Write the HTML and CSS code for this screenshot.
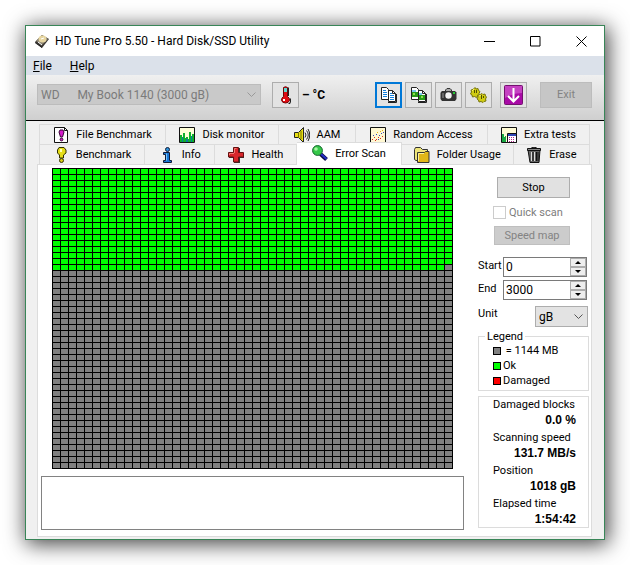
FILE: index.html
```html
<!DOCTYPE html>
<html lang="en">

<head>
    <meta charset="UTF-8">
    <meta name="viewport" content="width=device-width, initial-scale=1.0">
    <title>HD Tune Pro 5.50 - Hard Disk/SSD Utility</title>
    <link rel="stylesheet" href="styles.css">
</head>

<body>
    <div class="window">
        <header class="title-bar">
            <svg class="app-icon" viewBox="0 0 16 16">
                <path d="M1 9L8 2l7 4-7 9z" fill="#3a3632"/>
                <path d="M2 8l6-6 6 4-6 6z" fill="#8d8573"/>
                <ellipse cx="8.500" cy="6" rx="4" ry="3.500" fill="#e6d5a0"/>
                <path d="M7 6l3-1M4 9l4 3" stroke="#fff" fill="none"/>
                <path d="M1 9l7 5v1l-7-5z" fill="#111"/>
            </svg>
            <h1>HD Tune Pro 5.50 - Hard Disk/SSD Utility</h1>
            <div class="window-buttons">
                <button aria-label="Minimize"><svg viewBox="0 0 11 11"><path d="M0 5.500h11"/></svg></button>
                <button aria-label="Maximize"><svg viewBox="0 0 11 11"><path d="M.5.5h9.500v9.500H.5z"/></svg></button>
                <button aria-label="Close"><svg viewBox="0 0 11 11"><path d="M.5.500l10 10M10.500.5l-10 10"/></svg></button>
            </div>
        </header>

        <nav class="menu-bar">
            <a href="#file"><u>F</u>ile</a>
            <a href="#help"><u>H</u>elp</a>
        </nav>

        <div class="toolbar">
            <select class="drive-select" aria-label="Drive" disabled>
                <option>WD &nbsp; &nbsp; &nbsp;My Book 1140 (3000 gB)</option>
            </select>
            <button class="tool" aria-label="Temperature">
                <svg class="thermometer" viewBox="0 0 17 18">
                    <path d="M6.500 1.500Q8.500 0 10.500 1.500V10.500Q13 12 12.500 14.500 11.500 17 8.500 17 5 17 4.500 14 4.500 12 6.500 10.500z" fill="#e00b12" stroke="#6d0508"/>
                    <path d="M7 2h3v4H7z" fill="#5fd9d2"/>
                    <path d="M11 1v9h1V2zM13 12v4l-2 2h2l1-2v-3z" fill="#222"/>
                    <path d="M6 13h2v2H6z" fill="#fff"/>
                </svg>
            </button>
            <span class="temperature">– °C</span>
            <div class="tool-group">
                <button class="tool focused" aria-label="Copy text">
                    <svg viewBox="0 0 17 16">
                        <path d="M1.500.5h5l2 2v10h-7z" fill="#fff" stroke="#222"/>
                        <path d="M8.500 3.500h4l3 3v8h-7z" fill="#fff" stroke="#222"/>
                        <path d="M12.500 3.500v3h3M8 15.500h8.500V7" fill="none" stroke="#222"/>
                        <path d="M3 3.500h3M3 5.500h4M3 7.500h4M3 9.500h4M10 6.500h2M10 8.500h4M10 10.500h4M10 12.500h4" stroke="#1480dc"/>
                    </svg>
                </button>
                <button class="tool" aria-label="Copy picture">
                    <svg viewBox="0 0 17 16">
                        <path d="M1.500.5h5l2 2v10h-7z" fill="#fff" stroke="#222"/>
                        <path d="M8.500 3.500h4l3 3v8h-7z" fill="#fff" stroke="#222"/>
                        <path d="M12.500 3.500v3h3M8 15.500h8.500V7" fill="none" stroke="#222"/>
                        <path d="M2 5h6v5H2zM9 8h6v5H9z" fill="#279b18"/>
                        <path d="M3 6h2v2H3zM11 9h2v2h-2z" fill="#8de04a"/>
                        <path d="M2 3h4v2H2zM9 6h3v2H9z" fill="#77c7ef"/>
                    </svg>
                </button>
                <button class="tool" aria-label="Save screenshot">
                    <svg viewBox="0 0 17 16">
                        <path d="M5.500 5V3L7 1.500h3L11.500 3v2" fill="#aaa" stroke="#333"/>
                        <path d="M1 5l1-1h13l1.500 1.500V12L15 14H2L.5 12V6z" fill="#333"/>
                        <circle cx="8.500" cy="8.500" r="3.200" fill="#f4f4f4"/>
                        <path d="M2 6h2v5H2z" fill="#666"/>
                        <path d="M13 5h2v2h-2z" fill="#25ce35"/>
                    </svg>
                </button>
                <button class="tool" aria-label="Options">
                    <svg viewBox="0 0 17 16">
                        <g fill="#d0cc12" stroke="#77740a">
                            <path d="M5 .5l1 1.500 2-.5.5 2 1.500 1-1 2 .5 2-2 .5-1 1.500-2-1-2 .5-.5-2-1.500-1 1-2-.5-2 2-.5z"/>
                            <path d="M12 6.500l1 1 2-.5.5 2 1 1-1 2 .5 2-2 .5-1 1-2-1-2 .5-.5-2-1.500-1 1-2-.5-2 2 0z"/>
                        </g>
                        <path d="M4.500 3v3M6.500 3v3M11.500 8v4M13.500 9v2" stroke="#504f00"/>
                        <path d="M2 4l2-2M9 9l2-1" stroke="#f6f36c"/>
                    </svg>
                </button>
            </div>
            <button class="tool update" aria-label="Check for updates">
                <svg viewBox="0 0 19 20">
                    <rect x=".5" y=".5" width="18" height="19" rx="1" fill="#a80aa6" stroke="#74106f"/>
                    <path d="M1 1h17v7Q9 8 1 13z" fill="#c541c2"/>
                    <path d="M9.500 3v13M4 11l5.500 5.500L15 11" fill="none" stroke="#fff" stroke-width="2"/>
                </svg>
            </button>
            <button class="exit" disabled>Exit</button>
        </div>

        <main>
            <div class="tabs" role="tablist">
                <div class="tab-row back-row">
                    <button role="tab">
                        <svg viewBox="0 0 16 16">
                            <path d="M1.500.5h10l3 3v12h-13z" fill="#fff" stroke="#111"/>
                            <path d="M11.500.5v3h3" fill="none" stroke="#111"/>
                            <path d="M7 3h3l1 2-1.500 5h-2L6 5z" fill="#d51bcb" stroke="#3a0738"/>
                            <circle cx="8.500" cy="12.500" r="1.400" fill="#d51bcb" stroke="#3a0738"/>
                        </svg>
                        File Benchmark
                    </button>
                    <button role="tab">
                        <svg viewBox="0 0 16 16">
                            <path d="M.5.5h15v15H.5z" fill="#ffffd8" stroke="#111"/>
                            <path d="M1 15V8h2v2h1V6h2v5h1v-1h2v2h1V5h2v4h1V7h2v8z" fill="#0fb02d"/>
                            <path d="M3 15v-5h1v5zM7 15v-3h2v3zM12 15V9h1v6z" fill="#087ca0"/>
                        </svg>
                        Disk monitor
                    </button>
                    <button role="tab">
                        <svg viewBox="0 0 16 16">
                            <path d="M.5 5.500h4l5-5v15l-5-5h-4z" fill="#e8df15" stroke="#222"/>
                            <path d="M4.500 5v6M7 4v8" stroke="#777200"/>
                            <path d="M11 5.500q2 2.500 0 5M12.500 3.500q3.500 4.500 0 9M14 2q3.500 6 0 12" fill="none" stroke="#222"/>
                        </svg>
                        AAM
                    </button>
                    <button role="tab">
                        <svg viewBox="0 0 16 16">
                            <path d="M.5.5h15v15H.5z" fill="#fff8d2" stroke="#111"/>
                            <path d="M2 12h1v1H2zM4 10h1v1H4zM6 12h1v1H6zM8 10h1v1H8zM10 11h1v1h-1zM12 9h1v1h-1zM5 13h1v1H5z" fill="#d83124"/>
                            <path d="M3 8h1v1H3zM6 7h1v1H6zM9 8h1v1H9zM11 6h1v1h-1zM13 5h1v1h-1zM8 12h1v1H8z" fill="#3b46bf"/>
                            <path d="M7 5h1v1H7zM10 4h1v1h-1zM12 3h1v1h-1z" fill="#e7b21b"/>
                        </svg>
                        Random Access
                    </button>
                    <button role="tab">
                        <svg viewBox="0 0 16 16">
                            <path d="M.5.500h15v15H.5z" fill="#fffbd4" stroke="#111"/>
                            <path d="M1 15V7h2v3h1V9h1v6z" fill="#19a843"/>
                            <path d="M6.500 6.500h9v9h-9z" fill="#fff" stroke="#111"/>
                            <path d="M7 7h8v2H7z" fill="#3046b5"/>
                            <path d="M8 10h1v1H8zM10 10h1v1h-1zM12 10h1v1h-1zM8 12h1v1H8zM10 12h1v1h-1zM12 12h1v1h-1zM8 14h1v1H8zM10 14h1v1h-1zM12 14h1v1h-1z" fill="#b0258c"/>
                        </svg>
                        Extra tests
                    </button>
                </div>
                <div class="tab-row front-row">
                    <button role="tab">
                        <svg viewBox="0 0 16 16">
                            <path d="M6 .5h5L13 3v3l-2.500 2v3h-4V8L4.500 6V3z" fill="#e5dd18" stroke="#333100"/>
                            <path d="M7 2h2v3H7z" fill="#ffffb4"/>
                            <circle cx="8.500" cy="13.500" r="2" fill="#d6ce15" stroke="#333100"/>
                        </svg>
                        Benchmark
                    </button>
                    <button role="tab">
                        <svg viewBox="0 0 16 16">
                            <circle cx="8.500" cy="2.500" r="2" fill="#2d91d8" stroke="#101b37"/>
                            <path d="M4.500 5.500h6v8h2v2h-8v-2h2v-6h-2z" fill="#1674d5" stroke="#101b37"/>
                            <path d="M7.500 6.500v7" stroke="#75c5ff"/>
                        </svg>
                        Info
                    </button>
                    <button role="tab">
                        <svg viewBox="0 0 16 16">
                            <path d="M6 1h6v5h4v5h-4v5H6v-5H1V6h5z" fill="#333"/>
                            <path d="M5.500.5h5v5h5v4.500h-5v5h-5v-5h-5V5.500h5z" fill="#d8262b" stroke="#64100f"/>
                            <path d="M6.500 6V1.500h2M1.500 8V6.500H6" fill="none" stroke="#f47873"/>
                        </svg>
                        Health
                    </button>
                    <button role="tab" class="active" aria-selected="true">
                        <svg viewBox="0 0 16 16">
                            <path d="M8.500 9l6 5.500" stroke="#080840" stroke-width="4"/>
                            <path d="M9 9l5.500 5" stroke="#2430c5" stroke-width="2"/>
                            <circle cx="5.500" cy="5.500" r="4.900" fill="#35c849" stroke="#12632a"/>
                            <circle cx="4" cy="4" r="1.800" fill="#a8f3a3"/>
                        </svg>
                        Error Scan
                    </button>
                    <button role="tab">
                        <svg viewBox="0 0 16 16">
                            <path d="M.5 2.500l1-2h5l2 2h5v11H2l-1.500-1z" fill="#eee57a" stroke="#333"/>
                            <path d="M3.500 5.500h7l1-1h3.500v11H3.500z" fill="#e1b719" stroke="#333"/>
                            <path d="M4.500 14V6.500H10" fill="none" stroke="#fff199"/>
                        </svg>
                        Folder Usage
                    </button>
                    <button role="tab">
                        <svg viewBox="0 0 16 16">
                            <path d="M2 3h12l-1 12.500H4z" fill="#666" stroke="#111"/>
                            <path d="M1.500 1.500h13v2h-13zM6 0h4v1H6z" fill="#888" stroke="#111"/>
                            <path d="M5.500 5v9M8.500 5v9" stroke="#ddd"/>
                            <path d="M7 5v9M10.500 5v9M12 5v9" stroke="#111"/>
                        </svg>
                        Erase
                    </button>
                </div>
            </div>

            <div class="panel">
                <div class="scan-section">
                    <div class="block-map" id="blockMap"></div>
                    <textarea class="log" aria-label="Scan log" readonly></textarea>
                </div>

                <div class="side-section">
                    <div class="actions">
                        <button class="stop">Stop</button>
                        <label class="quick-scan"><input type="checkbox" disabled>Quick scan</label>
                        <button class="speed-map" disabled>Speed map</button>
                    </div>

                    <div class="fields">
                        <label for="start">Start</label>
                        <div class="spinner">
                            <input type="text" id="start" value="0">
                            <div class="arrows">
                                <button aria-label="Increase start" onclick="stepValue('start', 1)"></button>
                                <button aria-label="Decrease start" onclick="stepValue('start', -1)"></button>
                            </div>
                        </div>
                        <label for="end">End</label>
                        <div class="spinner">
                            <input type="text" id="end" value="3000">
                            <div class="arrows">
                                <button aria-label="Increase end" onclick="stepValue('end', 1)"></button>
                                <button aria-label="Decrease end" onclick="stepValue('end', -1)"></button>
                            </div>
                        </div>
                    </div>
                    <div class="unit-row">
                        <label for="unit">Unit</label>
                        <select id="unit" class="unit-select">
                            <option>gB</option>
                        </select>
                    </div>

                    <fieldset class="legend">
                        <legend>Legend</legend>
                        <ul>
                            <li><span class="swatch"></span>&nbsp;= 1144 MB</li>
                            <li><span class="swatch ok"></span>Ok</li>
                            <li><span class="swatch damaged"></span>Damaged</li>
                        </ul>
                    </fieldset>

                    <dl class="stats">
                        <dt>Damaged blocks</dt>
                        <dd>0.0 %</dd>
                        <dt>Scanning speed</dt>
                        <dd>131.7 MB/s</dd>
                        <dt>Position</dt>
                        <dd>1018 gB</dd>
                        <dt>Elapsed time</dt>
                        <dd>1:54:42</dd>
                    </dl>
                </div>
            </div>
        </main>
    </div>

    <script>
        const totalBlocks = 2500;
        const scannedBlocks = 849;
        const blockMap = document.getElementById('blockMap');

        for (let i = 0; i < totalBlocks; i++) {
            const block = document.createElement('span');
            if (i < scannedBlocks) block.className = 'ok';
            blockMap.appendChild(block);
        }

        function stepValue(id, step) {
            const input = document.getElementById(id);
            input.value = Math.max(0, (parseInt(input.value) || 0) + step);
        }
    </script>
</body>

</html>
```
FILE: styles.css
```css
* {
    box-sizing: border-box;
}

body {
    margin: 0;
    padding: 25px;
    min-height: 100vh;
    display: flex;
    background: #fff;
    color: #000;
    font-family: Roboto, "Liberation Sans", sans-serif;
    font-size: 11px;
}

button,
input,
select,
textarea {
    font: inherit;
    color: inherit;
    margin: 0;
    padding: 0;
    border-radius: 0;
    outline: none;
}

.window {
    flex: 1;
    min-width: 0;
    display: flex;
    flex-direction: column;
    border: 1px solid #388557;
    background: #f0f0f0;
    box-shadow: 2px 3px 20px 1px rgba(0, 0, 0, 0.75);
}

.title-bar {
    display: flex;
    align-items: center;
    height: 30px;
    padding-left: 8px;
    background: #fff;
}

.app-icon {
    width: 16px;
    height: 16px;
}

h1 {
    flex: 1;
    margin: 0 0 0 5px;
    font-size: 12px;
    font-weight: normal;
}

.window-buttons {
    display: flex;
}

.window-buttons button {
    width: 46px;
    height: 30px;
    border: none;
    background: none;
}

.window-buttons svg {
    display: block;
    width: 11px;
    height: 11px;
    margin: 0 auto;
    fill: none;
    stroke: #000;
}

.menu-bar {
    display: flex;
    gap: 18px;
    height: 19px;
    padding-left: 7px;
    background: #dbe1ea;
    font-size: 12px;
    line-height: 20px;
}

.menu-bar a {
    color: #000;
    text-decoration: none;
}

.toolbar {
    display: flex;
    align-items: center;
    height: 46px;
    padding: 0 12px 6px 11px;
    border-bottom: 1px solid #000;
    background: linear-gradient(#f0f0f0, #cfcfcf);
}

select {
    appearance: none;
    background: url("data:image/svg+xml,%3Csvg xmlns='http://www.w3.org/2000/svg' width='9' height='6'%3E%3Cpath d='M.5.5l4 4 4-4' fill='none' stroke='%23555'/%3E%3C/svg%3E") no-repeat right 4px center #e3e3e3;
    border: 1px solid #adadad;
}

.drive-select {
    width: 224px;
    height: 21px;
    padding-left: 3px;
    margin-right: 11px;
    border-color: #bcbcbc;
    background-color: #c9c9c9;
    background-image: url("data:image/svg+xml,%3Csvg xmlns='http://www.w3.org/2000/svg' width='9' height='6'%3E%3Cpath d='M.5.5l4 4 4-4' fill='none' stroke='%23999'/%3E%3C/svg%3E");
    color: #7b7b7b;
    font-size: 12px;
    opacity: 1;
}

.tool {
    display: flex;
    align-items: center;
    justify-content: center;
    width: 27px;
    height: 26px;
    border: 1px solid #adadad;
    background: #e3e3e3;
}

.tool svg {
    flex: none;
    width: 17px;
    height: 16px;
}

.tool .thermometer {
    height: 18px;
}

.tool.focused {
    border: 2px solid #0078d7;
}

.tool.update svg {
    width: 19px;
    height: 20px;
}

.temperature {
    margin: 0 auto 0 3px;
    font-size: 12px;
    font-weight: bold;
}

.tool-group {
    display: flex;
    gap: 3px;
    margin-right: 8px;
}

.exit {
    width: 52px;
    height: 26px;
    margin-left: 13px;
    border: 1px solid #bcbcbc;
    background: #c6c6c6;
    color: #838383;
}

main {
    flex: 1;
    display: flex;
    flex-direction: column;
    padding: 3px 12px 2px 11px;
}

.tabs {
    padding: 0 2px;
}

.tab-row {
    display: grid;
    height: 20px;
}

.back-row {
    grid-template-columns: 127fr 113fr 77fr 132fr 102fr;
}

.front-row {
    grid-template-columns: 106fr 70fr 82fr 104fr 112fr 76fr;
}

.tab-row button {
    display: flex;
    align-items: center;
    justify-content: center;
    gap: 7px;
    border: 1px solid #dcdcdc;
    border-width: 1px 1px 0 0;
    background: #f0f0f0;
    white-space: nowrap;
}

.tab-row button:first-child {
    border-left-width: 1px;
}

.tab-row svg {
    flex: none;
    width: 16px;
    height: 16px;
}

.tab-row .active {
    z-index: 1;
    margin: -2px 0 -1px;
    padding-bottom: 2px;
    background: #fff;
}

.panel {
    flex: 1;
    display: flex;
    justify-content: space-between;
    padding: 3px 2px 6px 3px;
    border: 1px solid #dcdcdc;
    background: #fff;
}

.scan-section {
    display: flex;
    flex-direction: column;
    width: 423px;
}

.block-map {
    display: grid;
    grid-template-columns: repeat(50, 7px);
    grid-auto-rows: 5px;
    gap: 1px;
    align-self: flex-start;
    margin-left: 11px;
    padding: 1px;
    background: #000;
}

.block-map span {
    background: #808080;
}

.block-map .ok {
    background: #00ff00;
}

.log {
    flex: 1;
    min-height: 0;
    margin-top: 7px;
    border: 1px solid #828282;
    background: #fff;
    resize: none;
}

.side-section {
    width: 111px;
    padding-top: 9px;
}

.actions {
    display: flex;
    flex-direction: column;
    align-items: flex-end;
    padding-right: 19px;
}

.stop,
.speed-map {
    border: 1px solid #adadad;
    background: #e1e1e1;
}

.stop {
    width: 73px;
    height: 21px;
}

.quick-scan {
    display: flex;
    align-items: center;
    align-self: flex-start;
    gap: 3px;
    margin: 7px 0 6px 15px;
    color: #7d7d7d;
    line-height: 15px;
}

.quick-scan input {
    appearance: none;
    width: 13px;
    height: 13px;
    border: 1px solid #ccc;
}

.speed-map {
    width: 76px;
    height: 19px;
    border-color: #bfbfbf;
    background: #ccc;
    color: #838383;
}

.fields {
    display: grid;
    grid-template-columns: 25px minmax(0, 1fr);
    row-gap: 3px;
    margin-top: 12px;
    padding-right: 2px;
}

.fields label {
    line-height: 18px;
}

.spinner {
    display: flex;
    height: 20px;
    border: 1px solid #7a7a7a;
}

.spinner input {
    flex: 1;
    min-width: 0;
    padding-left: 2px;
    border: none;
    font-size: 12px;
}

.arrows {
    display: grid;
    width: 16px;
}

.arrows button {
    display: flex;
    align-items: center;
    justify-content: center;
    border: 1px solid #adadad;
    background: #eee;
}

.arrows button::before {
    content: "";
    border: 3px solid transparent;
    border-top-width: 0;
    border-bottom-color: #000;
}

.arrows button:last-child::before {
    border-width: 3px 3px 0;
    border-top-color: #000;
}

.unit-row {
    display: flex;
    justify-content: space-between;
    margin: 6px 1px 3px 0;
}

.unit-row label {
    line-height: 16px;
}

.unit-select {
    width: 53px;
    height: 21px;
    padding-left: 3px;
    font-size: 12px;
}

.legend {
    height: 61px;
    margin: 0 0 5px;
    padding: 0 0 0 14px;
    border: 1px solid #dcdcdc;
}

.legend legend {
    margin-left: -8px;
    padding: 0 2px;
    line-height: 13px;
}

.legend ul {
    margin: 0;
    padding: 0;
    list-style: none;
}

.legend li {
    display: flex;
    align-items: center;
    gap: 2px;
    height: 15px;
}

.swatch {
    width: 8px;
    height: 8px;
    border: 1px solid #000;
    background: #808080;
}

.swatch.ok {
    background: #00ff00;
}

.swatch.damaged {
    background: #ff0000;
}

.stats {
    margin: 0;
    padding: 0 12px 0 14px;
    border: 1px solid #dcdcdc;
    line-height: 16px;
}

.stats dd {
    margin: 0 0 2px;
    font-family: "Liberation Sans", Arial, sans-serif;
    font-size: 12px;
    font-weight: bold;
    line-height: 15px;
    text-align: right;
}

.stats dd:last-child {
    margin-bottom: 0;
}
```
